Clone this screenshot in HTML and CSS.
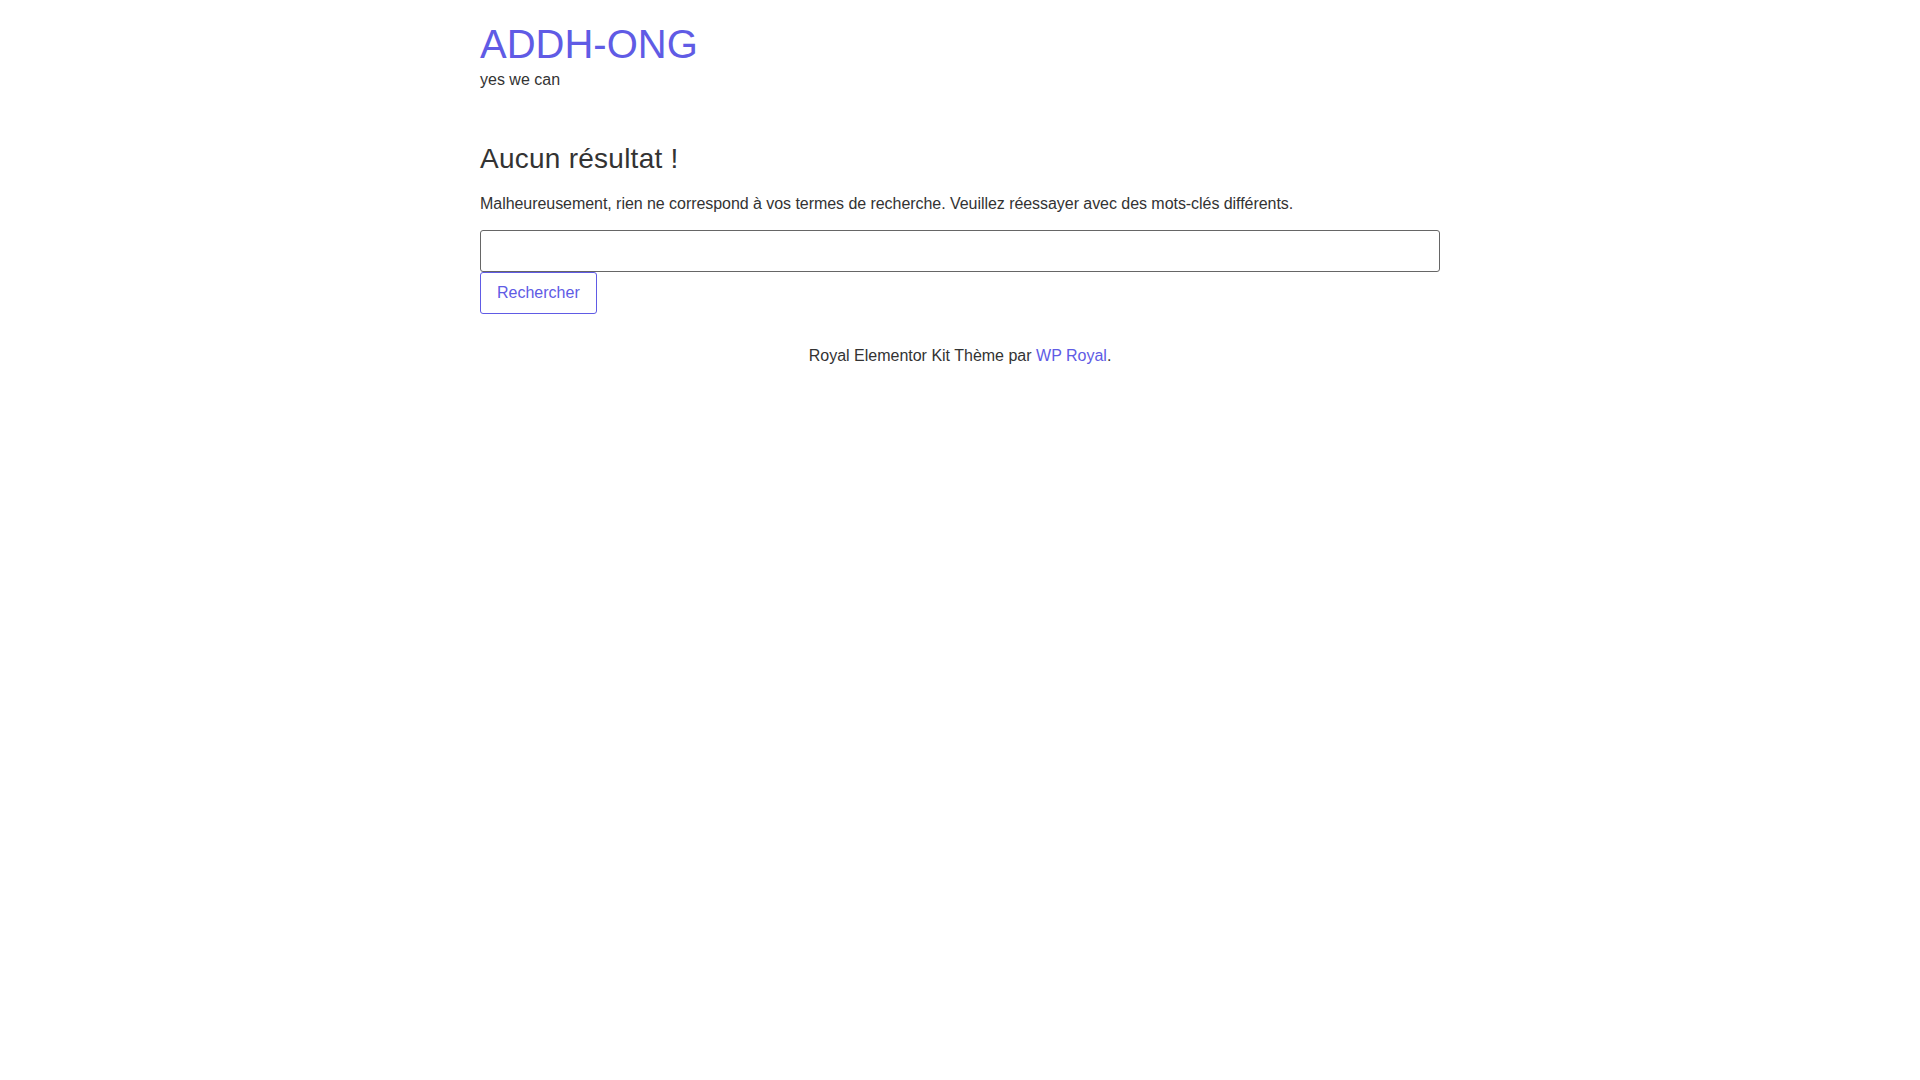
FILE: index.html
```html
<!DOCTYPE html>
<html lang="fr">
<head>
<meta charset="utf-8">
<title>Aucun résultat – ADDH-ONG</title>
<link rel="stylesheet" href="styles.css">
</head>
<body>
<div class="page">
  <header class="site-header">
    <h1 class="site-title"><a href="#">ADDH-ONG</a></h1>
    <p class="site-description">yes we can</p>
  </header>
  <main class="site-main">
    <h2 class="page-title">Aucun résultat !</h2>
    <p class="notice">Malheureusement, rien ne correspond à vos termes de recherche. Veuillez réessayer avec des mots-clés différents.</p>
    <form class="search-form">
      <input class="search-field" type="search">
      <button class="search-submit" type="button">Rechercher</button>
    </form>
  </main>
  <footer class="site-footer">
    <p>Royal Elementor Kit Thème par <a href="#">WP Royal</a>.</p>
  </footer>
</div>
</body>
</html>
```

FILE: styles.css
```css
html, body {
  margin: 0;
  padding: 0;
  background: #fff;
}
body {
  font-family: "Liberation Sans", Arial, sans-serif;
  font-size: 16px;
  line-height: 24px;
  color: #333;
}
a {
  color: #605be5;
  text-decoration: none;
}
.page {
  width: 960px;
  margin: 0 auto;
}
.site-header {
  padding-top: 21px;
}
.site-title {
  margin: 0;
  font-size: 40px;
  font-weight: normal;
  line-height: 46px;
}
.site-description {
  margin: 1px 0 0;
}
.site-main {
  padding-top: 50px;
}
.page-title {
  margin: 0;
  font-size: 28px;
  letter-spacing: 0.25px;
  font-weight: normal;
  line-height: 34px;
}
.notice {
  margin: 16px 0 0;
  letter-spacing: -0.05px;
}
.search-form {
  margin-top: 14px;
  display: flex;
  flex-direction: column;
  align-items: flex-start;
}
.search-field {
  box-sizing: border-box;
  width: 960px;
  height: 42px;
  margin: 0;
  border: 1px solid #666;
  border-radius: 3px;
  background: #fff;
  padding: 0 10px;
  font: inherit;
}
.search-submit {
  box-sizing: border-box;
  height: 42px;
  margin: 0;
  padding: 0 16px;
  border: 1px solid #605be5;
  border-radius: 3px;
  background: #fff;
  color: #605be5;
  font-family: "Liberation Sans", Arial, sans-serif;
  font-size: 16px;
  line-height: 24px;
}
.site-footer {
  text-align: center;
  padding-top: 30px;
}
.site-footer p {
  margin: 0;
}
```
